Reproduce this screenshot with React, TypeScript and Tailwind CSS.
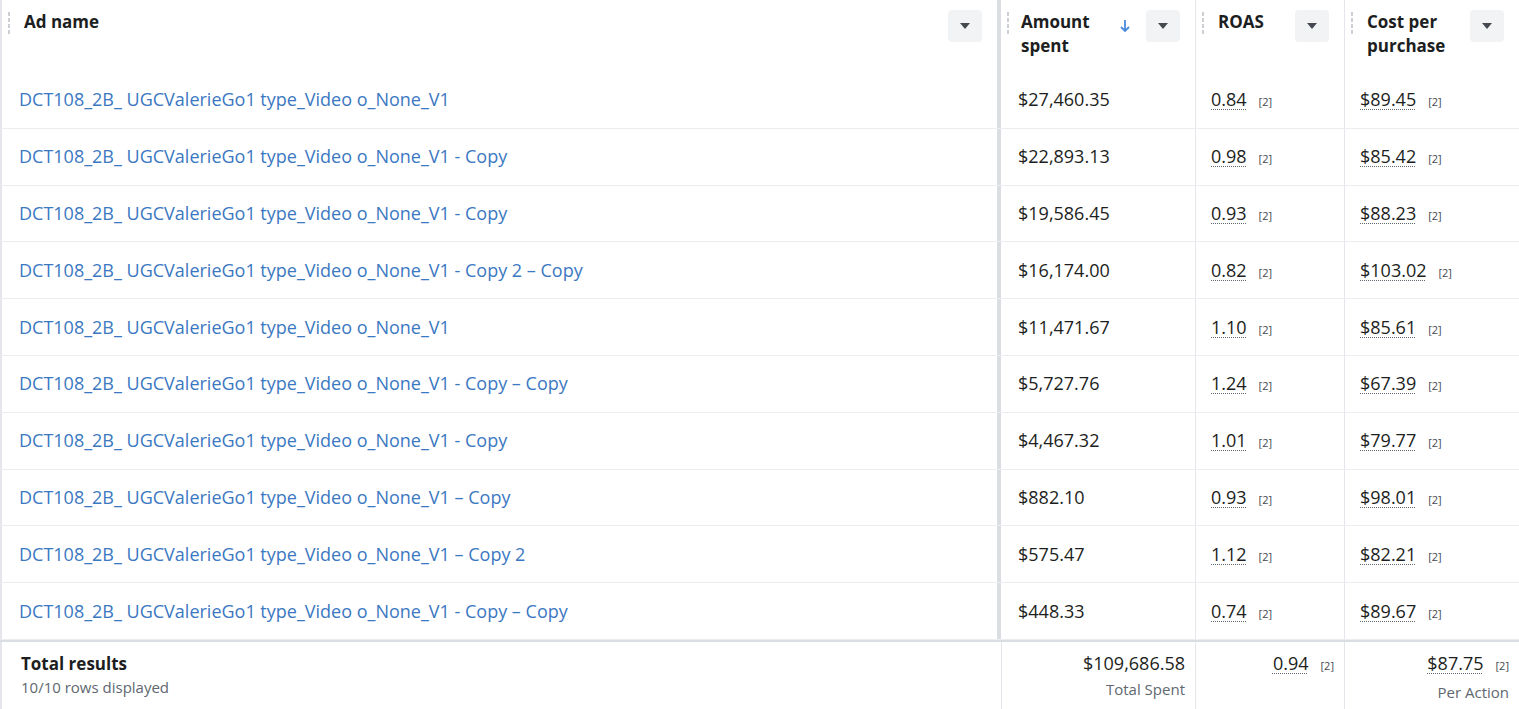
import React from 'react';

const rows = [
  ['DCT108_2B_ UGCValerieGo1 type_Video o_None_V1', '$27,460.35', '0.84', '$89.45'],
  ['DCT108_2B_ UGCValerieGo1 type_Video o_None_V1 - Copy', '$22,893.13', '0.98', '$85.42'],
  ['DCT108_2B_ UGCValerieGo1 type_Video o_None_V1 - Copy', '$19,586.45', '0.93', '$88.23'],
  ['DCT108_2B_ UGCValerieGo1 type_Video o_None_V1 - Copy 2 – Copy', '$16,174.00', '0.82', '$103.02'],
  ['DCT108_2B_ UGCValerieGo1 type_Video o_None_V1', '$11,471.67', '1.10', '$85.61'],
  ['DCT108_2B_ UGCValerieGo1 type_Video o_None_V1 - Copy – Copy', '$5,727.76', '1.24', '$67.39'],
  ['DCT108_2B_ UGCValerieGo1 type_Video o_None_V1 - Copy', '$4,467.32', '1.01', '$79.77'],
  ['DCT108_2B_ UGCValerieGo1 type_Video o_None_V1 – Copy', '$882.10', '0.93', '$98.01'],
  ['DCT108_2B_ UGCValerieGo1 type_Video o_None_V1 – Copy 2', '$575.47', '1.12', '$82.21'],
  ['DCT108_2B_ UGCValerieGo1 type_Video o_None_V1 - Copy – Copy', '$448.33', '0.74', '$89.67'],
];

const Caret = () => (
  <div className="w-[34px] h-[32px] rounded bg-[#f2f3f5] flex items-center justify-center">
    <svg width="12" height="8" viewBox="0 0 12 8"><path d="M1 1h10L6 7z" fill="#444950" /></svg>
  </div>
);

const Grip = () => (
  <div className="flex flex-col gap-[2px] mt-[2px]">
    {[0, 1, 2, 3].map((i) => <div key={i} className="w-[2px] h-[4px] bg-[#ccd0d5]" />)}
  </div>
);

const Metric = ({ v }: { v: string }) => (
  <span className="flex items-baseline gap-[12px]">
    <span className="underline decoration-dotted decoration-1 decoration-[#606770] underline-offset-[3px]">{v}</span>
    <span className="text-[11px] text-[#444950]">[2]</span>
  </span>
);

export default function App() {
  return (
    <div className="w-[1519px] h-[709px] bg-white text-[#1c1e21] overflow-hidden" style={{ fontFamily: '"Open Sans", "Liberation Sans", sans-serif' }}>
      <div className="flex h-[72px]">
        <div className="w-[997px] flex items-start justify-between pl-[6px] pr-[15px] pt-[10px] border-l-2 border-[#e4e6eb]">
          <div className="flex gap-[14px]"><Grip /><span className="text-[17px] font-bold leading-[24px]">Ad name</span></div>
          <Caret />
        </div>
        <div className="w-[198px] flex items-start justify-between pl-[6px] pr-[15px] pt-[10px] border-l-4 border-[#dadde1]">
          <div className="flex gap-[12px]"><Grip /><span className="text-[17px] font-bold leading-[24px]">Amount<br />spent</span></div>
          <div className="flex gap-[14px] items-start">
            <svg width="14" height="16" viewBox="0 0 14 16" className="mt-[8px]"><path d="M7 2v11M3 9l4 4 4-4" stroke="#4a89dc" strokeWidth="1.8" fill="none" /></svg>
            <Caret />
          </div>
        </div>
        <div className="w-[149px] flex items-start justify-between pl-[6px] pr-[15px] pt-[10px] border-l border-[#e4e6eb]">
          <div className="flex gap-[14px]"><Grip /><span className="text-[17px] font-bold leading-[24px]">ROAS</span></div>
          <Caret />
        </div>
        <div className="w-[175px] flex items-start justify-between pl-[6px] pr-[15px] pt-[10px] border-l border-[#e4e6eb]">
          <div className="flex gap-[14px]"><Grip /><span className="text-[17px] font-bold leading-[24px]">Cost per<br />purchase</span></div>
          <Caret />
        </div>
      </div>
      {rows.map((r, i) => (
        <div key={i} className="flex h-[56.8px] border-b border-[#ebedf0] text-[18px]">
          <div className="w-[997px] flex items-center pl-[17px] text-[#3b78c2] border-l-2 border-[#e4e6eb]">{r[0]}</div>
          <div className="w-[198px] flex items-center pl-[17px] border-l-4 border-[#dadde1]">{r[1]}</div>
          <div className="w-[149px] flex items-center pl-[15px] border-l border-[#e4e6eb]"><Metric v={r[2]} /></div>
          <div className="w-[175px] flex items-center pl-[15px] border-l border-[#e4e6eb]"><Metric v={r[3]} /></div>
        </div>
      ))}
      <div className="flex h-[70px] border-t-2 border-[#dadde1]">
        <div className="w-[1001px] pl-[19px] pt-[10px] border-l-2 border-[#e4e6eb]">
          <div className="text-[17px] font-bold leading-[24px]">Total results</div>
          <div className="text-[15px] text-[#606770] leading-[22px]">10/10 rows displayed</div>
        </div>
        <div className="w-[194px] flex flex-col items-end pr-[10px] pt-[8px] border-l border-[#e4e6eb]">
          <div className="text-[18px] leading-[26px]">$109,686.58</div>
          <div className="text-[15px] text-[#606770] leading-[22px] mt-[2px]">Total Spent</div>
        </div>
        <div className="w-[149px] flex flex-col items-end pr-[10px] pt-[8px] border-l border-[#e4e6eb] text-[18px] leading-[26px]"><Metric v="0.94" /></div>
        <div className="w-[175px] flex flex-col items-end pr-[10px] pt-[8px] border-l border-[#e4e6eb]">
          <div className="text-[18px] leading-[26px]"><Metric v="$87.75" /></div>
          <div className="text-[15px] text-[#606770] leading-[22px] mt-[2px]">Per Action</div>
        </div>
      </div>
    </div>
  );
}
